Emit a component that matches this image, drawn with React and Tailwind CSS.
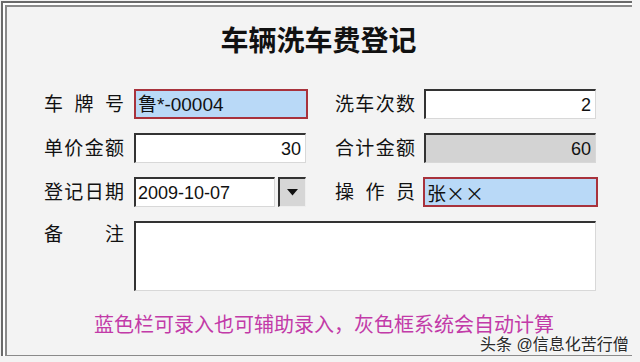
import React from 'react';

const cjk = { fontFamily: '"Liberation Sans", "Noto Sans CJK SC", sans-serif' };

function Label({ chars }) {
  return (
    <div className="flex w-[80px] justify-between text-[19px] leading-none text-[#111]">
      {chars.map((c, i) => (
        <span key={i}>{c}</span>
      ))}
    </div>
  );
}

function Field({ value, kind = 'white', align = 'left', className = '' }) {
  const base = 'flex h-[30px] items-center px-[2px] text-[18px] leading-none text-[#111]';
  const styles = {
    blue: 'border-2 border-[#a8323c] bg-[#b9d9f7]',
    white: 'border-t-2 border-l-2 border-t-[#333] border-l-[#333] border-b border-r border-b-[#d8d8d8] border-r-[#d8d8d8] bg-white',
    gray: 'border-t-2 border-l-2 border-t-[#333] border-l-[#333] border-b border-r border-b-[#d8d8d8] border-r-[#d8d8d8] bg-[#d3d3d3]',
  };
  return (
    <div className={`${base} ${styles[kind]} ${align === 'right' ? 'justify-end pr-[4px]' : ''} ${className}`}>
      {value}
    </div>
  );
}

export default function App() {
  return (
    <div className="relative h-[362px] w-[640px] overflow-hidden bg-[#f3f3f3]" style={cjk}>
      <div className="h-[356px] w-[632px] pl-[1px] pt-[1px]">
        <div className="h-full w-full border-l-2 border-t-2 border-[#6a6a6a]">
          <div className="h-full w-full border-l-2 border-t-2 border-white">
            <div className="h-full w-full border-l-2 border-t-2 border-b border-[#8a8a8a] bg-[#f3f3f3] pl-[37px]">
              <div className="mt-[17px] w-[549px] text-center text-[28px] font-bold leading-[36px] text-[#111]">
                车辆洗车费登记
              </div>

              <div className="mt-[29px] flex flex-col gap-[14px]">
                <div className="flex items-center">
                  <Label chars={['车', '牌', '号']} />
                  <Field
                    value={<span className="text-[19px]">鲁*-00004</span>}
                    kind="blue"
                    className="ml-[10px] w-[174px]"
                  />
                  <div className="w-[27px]" />
                  <Label chars={['洗', '车', '次', '数']} />
                  <Field value="2" align="right" className="ml-[9px] w-[172px]" />
                </div>

                <div className="flex items-center">
                  <Label chars={['单', '价', '金', '额']} />
                  <Field value="30" align="right" className="ml-[10px] w-[172px]" />
                  <div className="w-[29px]" />
                  <Label chars={['合', '计', '金', '额']} />
                  <Field value="60" kind="gray" align="right" className="ml-[9px] w-[172px]" />
                </div>

                <div className="flex items-center">
                  <Label chars={['登', '记', '日', '期']} />
                  <Field value="2009-10-07" className="ml-[10px] w-[141px]" />
                  <div className="ml-[3px] flex h-[30px] w-[28px] items-center justify-center border-t-2 border-l-2 border-t-[#333] border-l-[#333] border-b border-r border-b-[#eee] border-r-[#eee] bg-[#d6d6d6]">
                    <svg width="11" height="7" viewBox="0 0 11 7">
                      <path d="M0 0 H11 L5.5 6.5 Z" fill="#111" />
                    </svg>
                  </div>
                  <div className="w-[29px]" />
                  <Label chars={['操', '作', '员']} />
                  <Field
                    value={<span className="font-['Noto_Sans_CJK_SC'] text-[19px]">张××</span>}
                    kind="blue"
                    className="ml-[8px] w-[175px]"
                  />
                </div>

                <div className="flex items-start">
                  <div className="pt-[4px]">
                    <Label chars={['备', '注']} />
                  </div>
                  <div className="ml-[10px] h-[70px] w-[462px] border-t-2 border-l-2 border-t-[#333] border-l-[#333] border-b border-r border-b-[#d8d8d8] border-r-[#d8d8d8] bg-white" />
                </div>
              </div>

              <div className="mt-[21px] w-[560px] text-center text-[20px] leading-[26px] text-[#c23aa8]">
                蓝色栏可录入也可辅助录入，灰色框系统会自动计算
              </div>
            </div>
          </div>
        </div>
      </div>

      <div className="absolute left-[480px] top-[334px] text-[16px] leading-[22px] text-[#2a2a2a] [text-shadow:0_0_2px_#fff]">
        头条 @信息化苦行僧
      </div>
    </div>
  );
}
